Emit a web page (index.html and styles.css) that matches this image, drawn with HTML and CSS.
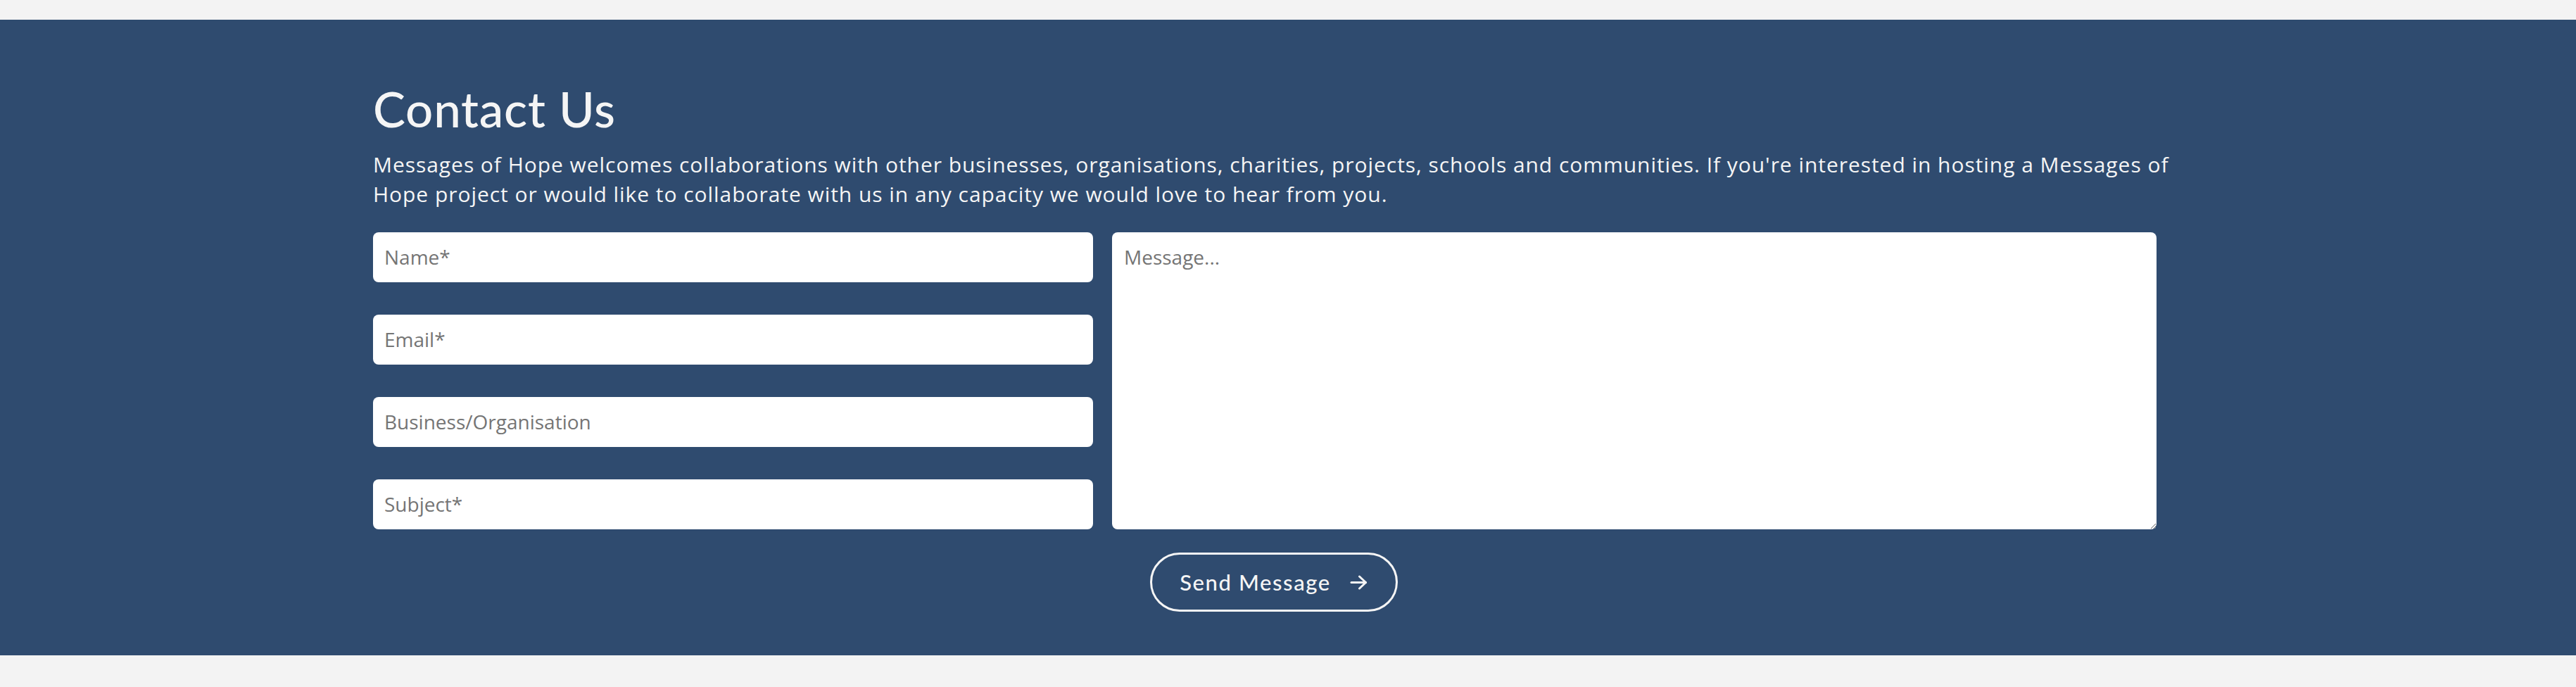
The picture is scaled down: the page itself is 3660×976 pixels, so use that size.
FILE: index.html
```html
<!DOCTYPE html>
<html lang="en">
<head>
<meta charset="utf-8">
<title>Contact Us</title>
<link rel="stylesheet" href="styles.css">
</head>
<body>
<section class="contact">
  <div class="container">
    <h2 class="contact-title">Contact Us</h2>
    <p class="contact-intro">Messages of Hope welcomes collaborations with other businesses, organisations, charities, projects, schools and communities. If you're interested in hosting a Messages of Hope project or would like to collaborate with us in any capacity we would love to hear from you.</p>
    <form class="contact-form">
      <div class="fields">
        <div class="field-col">
          <input class="field" type="text" placeholder="Name*">
          <input class="field" type="email" placeholder="Email*">
          <input class="field" type="text" placeholder="Business/Organisation">
          <input class="field" type="text" placeholder="Subject*">
        </div>
        <textarea class="field message" placeholder="Message..."></textarea>
      </div>
      <div class="actions">
        <button class="send-btn" type="button">
          <span class="send-label">Send Message</span>
          <svg class="arrow" width="25" height="21" viewBox="0 0 25 21" fill="none" stroke="currentColor" stroke-width="3" stroke-linecap="round" stroke-linejoin="round"><path d="M2 10.5h20.5"/><path d="M13.5 2l9 8.5-9 8.5"/></svg>
        </button>
      </div>
    </form>
  </div>
</section>
</body>
</html>
```

FILE: styles.css
```css
html, body {
  margin: 0;
  padding: 0;
}
body {
  background: #f3f3f3;
  padding: 28px 0 44px;
  font-family: "Open Sans", "Noto Sans", sans-serif;
}
.contact {
  background: #2f4b6f;
  color: #f5f5f5;
  padding: 86px 0 62px;
}
.container {
  width: 2600px;
  margin: 0 auto;
}
.contact-title {
  margin: 0;
  font-family: "Lato", "Noto Sans", sans-serif;
  font-weight: 500;
  font-size: 69px;
  line-height: 1.2;
  letter-spacing: 0.8px;
}
.contact-intro {
  margin: 16px 0 0;
  font-size: 30px;
  line-height: 42px;
  letter-spacing: 0.95px;
}
.contact-form {
  width: 2560px;
  margin-top: 33px;
}
.fields {
  display: grid;
  grid-template-columns: 1023px 1484px;
  column-gap: 27px;
  height: 422px;
}
.field-col {
  display: flex;
  flex-direction: column;
  justify-content: space-between;
}
.field {
  box-sizing: border-box;
  border: none;
  border-radius: 8px;
  background: #fff;
  font-family: "Open Sans", "Noto Sans", sans-serif;
  font-size: 28px;
  color: #333;
  outline: none;
}
input.field {
  height: 71px;
  padding: 0 16px;
}
.field::placeholder {
  color: #757575;
}
.message {
  height: 422px;
  padding: 16px 17px;
  resize: vertical;
  line-height: 1.36;
}
.actions {
  display: flex;
  justify-content: center;
  margin-top: 33px;
}
.send-btn {
  display: flex;
  align-items: center;
  gap: 27px;
  height: 84px;
  padding: 0 40px 0 39px;
  box-sizing: border-box;
  background: transparent;
  border: 3px solid #f5f5f5;
  border-radius: 42px;
  color: #f5f5f5;
  font-family: "Lato", "Noto Sans", sans-serif;
  font-size: 31px;
  font-weight: 500;
  letter-spacing: 1.6px;
  cursor: pointer;
}
.send-label {
  display: block;
}
.arrow {
  display: block;
  margin-top: 1px;
}
```
